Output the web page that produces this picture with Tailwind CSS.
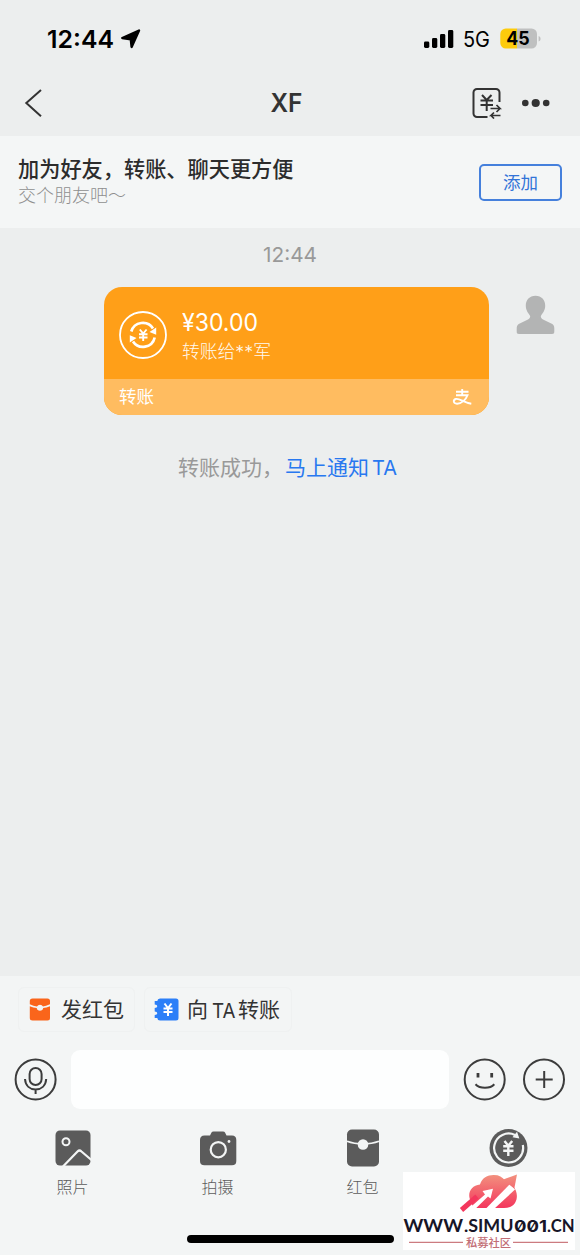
<!DOCTYPE html>
<html lang="zh-CN">
<head>
<meta charset="utf-8">
<meta name="viewport" content="width=device-width, initial-scale=1">
<title>XF</title>
<script src="https://cdn.jsdelivr.net/npm/@tailwindcss/browser@4"></script>
</head>
<body class="bg-[#eceeee] font-['Inter','Noto_Sans_CJK_SC',sans-serif] text-[#333]">
<div class="relative flex h-[1255px] w-[580px] flex-col overflow-hidden">
  <!-- Status bar -->
  <div class="flex h-[78px] shrink-0 items-center justify-between pr-[39px] pl-[46px] text-black">
    <div class="flex items-center gap-[3px]">
      <svg width="72" height="30" viewBox="0 0 72 30"><text x="1" y="23.500" textLength="67" lengthAdjust="spacingAndGlyphs" font-size="24.5" class="font-semibold">12:44</text></svg>
      <svg width="20" height="20" viewBox="0 0 20 20"><path d="M18 1.600 10.600 18 9.800 10.300 1.300 9Z" fill="#000" stroke="#000" stroke-width="2.400" stroke-linejoin="round"/></svg>
    </div>
    <div class="flex items-center">
      <svg width="30" height="20" viewBox="0 0 30 20"><rect x="0" y="12.5" width="5.3" height="6.5" rx="1.4"/><rect x="8" y="9" width="5.3" height="10" rx="1.4"/><rect x="16" y="5" width="5.3" height="14" rx="1.4"/><rect x="24" y="1" width="5.3" height="18" rx="1.4"/></svg>
      <svg class="ml-[9px]" width="28" height="24" viewBox="0 0 28 24"><text x="0" y="20" textLength="27" lengthAdjust="spacingAndGlyphs" font-size="21">5G</text></svg>
      <svg class="ml-[9px]" width="41" height="22" viewBox="0 0 41 22"><path d="M6 .5H17V20.500H6A5.500 5.500 0 0 1 .3 15V6A5.500 5.500 0 0 1 6 .5Z" fill="#fdcb0c"/><path d="M17 .5H31.500A5.500 5.500 0 0 1 37 6V15A5.500 5.500 0 0 1 31.500 20.500H17Z" fill="#bfc0c0"/><path d="M38.600 8C41.200 8.800 41.200 12.800 38.600 13.600Z" fill="#bfc0c0"/><text x="6.300" y="17" textLength="23.500" lengthAdjust="spacingAndGlyphs" font-size="18.500" class="font-bold">45</text></svg>
    </div>
  </div>
  <!-- Title bar -->
  <div class="grid h-[58px] shrink-0 grid-cols-3 items-center pr-[30px] pb-[9px] pl-[24px]">
    <svg width="20" height="30" viewBox="0 0 20 30"><path d="M17 2 2.300 15 17 28.300" fill="none" stroke="#333" stroke-width="2"/></svg>
    <div><svg class="mx-auto" width="34" height="30" viewBox="0 0 34 30"><text x="0.500" y="24" textLength="32" lengthAdjust="spacingAndGlyphs" font-size="25" fill="#333" class="font-semibold">XF</text></svg></div>
    <div class="flex items-center justify-end gap-[19px]">
      <svg width="30" height="32" viewBox="0 0 30 32" fill="none" stroke="#333" stroke-width="2"><path d="M15.500 30H5A3.500 3.500 0 0 1 1.500 26.500V5.500A3.500 3.500 0 0 1 5 2H24A3.500 3.500 0 0 1 27.500 5.500V15"/><path d="M10 8 14.700 13 19.500 8M14.700 13V24M8.500 13.500H21M8.500 18H21"/><path d="M18.500 21.500H28L24.500 18M28 21.500 24.500 25M28.500 28.500H19L22 25.500M19 28.500 22 31.500" stroke-width="1.700"/></svg>
      <svg width="29" height="10" viewBox="0 0 29 10" fill="#333"><circle cx="4.300" cy="5" r="3.300"/><circle cx="14.700" cy="5" r="4.100"/><circle cx="25.200" cy="5" r="3.300"/></svg>
    </div>
  </div>
  <!-- Add friend banner -->
  <div class="flex h-[92px] shrink-0 items-center justify-between bg-[#f4f6f6] px-[18px]">
    <div class="flex flex-col pt-[2px]">
      <div class="-mt-px text-[21.2px] leading-[27px] font-medium text-[#2c2c2c]">加为好友，转账、聊天更方便</div>
      <div class="text-[18px] leading-[26px] font-light text-[#8f8f8f]">交个朋友吧～</div>
    </div>
    <button class="flex h-[37px] w-[83px] items-center justify-center rounded-[5px] border-2 border-[#4580dc] pt-[2px] text-[17.500px] text-[#3274d8]">添加</button>
  </div>
  <!-- Conversation -->
  <div class="flex h-[748px] shrink-0 flex-col items-center">
    <div class="mt-[14px] h-[24px] w-[54px]"><svg width="54" height="24" viewBox="0 0 54 24"><text x="0" y="20" textLength="54" lengthAdjust="spacingAndGlyphs" font-size="20.500" fill="#999">12:44</text></svg></div>
    <div class="mt-[21px] flex w-full items-start pl-[104px]">
      <div class="h-[128px] w-[385px] overflow-hidden rounded-[18px] bg-[#ff9f18] text-white">
        <div class="flex h-[92px] items-center gap-[14px] pl-[14px]">
          <svg class="mt-[3px]" width="50" height="50" viewBox="0 0 50 50" fill="none" stroke="#fff"><circle cx="25" cy="25" r="23" stroke-width="1.800"/><path d="M13.300 21.500A12 12 0 0 1 35 18.500M36.700 27.500A12 12 0 0 1 15 31.500" stroke-width="2.700"/><path d="M38.200 17.500V24.800L31.500 22ZM11.800 32.500V25.200L18.500 28Z" fill="#fff" stroke="none"/><path d="M21.800 19.500 25.200 23.500 28.600 19.500M25.200 23.500V31M21 24.200H29.500M21 27.500H29.500" stroke-width="1.900"/></svg>
          <div class="flex flex-col pt-[9px]">
            <svg width="80" height="28" viewBox="0 0 80 28"><text x="0" y="21.500" textLength="76" lengthAdjust="spacingAndGlyphs" font-size="24" fill="#fff">¥30.00</text></svg>
            <div class="text-[17.800px] leading-[30px] font-light text-[#fffaf0]">转账给**军</div>
          </div>
        </div>
        <div class="flex h-[36px] items-center justify-between bg-[#ffbc60] pr-[17px] pl-[15px] text-[17.500px]">
          <span>转账</span>
          <svg width="20" height="18" viewBox="0 0 20 18" fill="none" stroke="#fff" stroke-width="1.900"><path d="M10.200 1V7M4 3.800H16.500M4 7.300H15.500C14 11.500 9.500 15.800 5 15.700 1.200 15.500.8 12 3.800 11 7.500 10 11.500 14.500 19.300 15.700"/></svg>
        </div>
      </div>
      <svg class="mt-[8px] ml-[27px]" width="40" height="40" viewBox="0 0 40 40" fill="#b3b4b4"><path d="M19.500.8C25.500.8 29.200 5.100 29.200 10.700 29.200 15.500 26.500 18.200 25 20.800 24.300 22.300 25.500 23.500 27 24.500L36.300 29C38 30.200 38.300 31.800 38.300 33.800V36.500C38.300 38.300 37.600 39 36 39H3C1.300 39 .7 38.300.7 36.500V33.800C.7 31.800 1.100 30.200 2.700 29L12 24.500C13.500 23.500 14.700 22.300 14 20.800 12.500 18.200 9.800 15.500 9.800 10.700 9.800 5.100 13.500.8 19.500.8Z"/></svg>
    </div>
    <div class="mt-[38px] flex w-full pl-[178px] text-[21px] leading-[30px]">
      <span class="w-[107px] whitespace-nowrap text-[#999]">转账成功，</span><span class="text-[#2878f0]">马上通知</span><svg class="ml-[3px]" width="32" height="30" viewBox="0 0 32 30"><text x="0" y="22" textLength="25" lengthAdjust="spacingAndGlyphs" font-size="20.500" fill="#2878f0">TA</text></svg>
    </div>
  </div>
  <!-- Composer -->
  <div class="flex h-[279px] shrink-0 flex-col bg-[#f3f5f5]">
    <div class="mt-[11px] flex h-[45px] gap-[9px] pl-[18px] text-[21px]">
      <div class="flex w-[117px] items-center rounded-[6px] border border-[#eff1f1] pl-[10px]">
        <svg width="22" height="23" viewBox="-.5 0 22 23"><path d="M3 .5H18Q20.500.5 20.500 3V6.300Q16 8.300 13.500 8.600A3.300 3.300 0 0 0 7.500 8.600Q4 8.200.3 6.300V3Q.3.500 3 .5Z" fill="#fa651b"/><path d="M.3 8.200Q4 9.800 7.200 10.100A3.300 3.300 0 0 0 13.700 10.100Q17 9.800 20.500 8.200V20Q20.500 22.500 18 22.500H3Q.3 22.500.3 20Z" fill="#fa651b"/></svg>
        <span class="ml-[10px] pt-px whitespace-nowrap">发红包</span>
      </div>
      <div class="flex w-[148px] items-center rounded-[6px] border border-[#eff1f1] pl-[9px]">
        <svg width="25" height="23" viewBox="0 0 25 23"><path d="M6 .5H22Q24.500.5 24.500 3V20Q24.500 22.500 22 22.500H6Q3.500 22.500 3.300 20H.7V17Q3.300 17 3.300 15.300 3.300 13.500.7 13.500V10Q3.300 10 3.300 8.200 3.300 6.500.7 6.500V3H3.300Q3.500.5 6 .5Z" fill="#2c7ff8"/><path d="M10.500 5.500 14 10 17.500 5.500M14 10V18M9.500 10.500H18.500M9.500 14H18.500" fill="none" stroke="#fff" stroke-width="2"/></svg>
        <span class="ml-[8px] pt-px">向</span><svg class="ml-[4px]" width="26" height="30" viewBox="0 0 26 30"><text x="0" y="22.500" textLength="23.500" lengthAdjust="spacingAndGlyphs" font-size="20.500" fill="#333">TA</text></svg><span class="pt-px whitespace-nowrap">转账</span>
      </div>
    </div>
    <div class="mt-[18px] flex h-[59px] items-center pl-[14px]">
      <svg width="43" height="43" viewBox="0 0 43 43" fill="none" stroke="#3c3c3c" stroke-width="2"><circle cx="21.600" cy="21.500" r="20"/><rect x="15.600" y="10" width="12" height="17" rx="6"/><path d="M11 21C11.500 28 16 31.500 21.600 31.500S31.700 28 32.200 21M21.600 31.500V36"/></svg>
      <div class="ml-[14px] h-[59px] w-[378px] rounded-[9px] bg-[#fdfefe]"></div>
      <svg class="ml-[14px]" width="43" height="43" viewBox="0 0 43 43" fill="none" stroke="#3c3c3c" stroke-width="2"><circle cx="21.700" cy="21.500" r="20"/><path d="M15 15V19.500M28.700 15V19.500" stroke-width="2.800"/><path d="M12.500 26.300C17 31 27 31 31.300 26.300"/></svg>
      <svg class="ml-[16px]" width="43" height="43" viewBox="0 0 43 43" fill="none" stroke="#3c3c3c" stroke-width="2"><circle cx="22" cy="21.500" r="20"/><path d="M22.200 13V30M13.700 21.500H30.700"/></svg>
    </div>
    <div class="mt-[19px] grid grid-cols-4 text-[16px] leading-[26px] font-light text-[#5c5c5c]">
      <div class="flex flex-col items-center gap-[6px]">
        <svg width="36" height="40" viewBox="0 0 36 40"><rect x=".5" y="2.500" width="35" height="35" rx="4.500" fill="#5b5b5b"/><circle cx="11" cy="13.800" r="3.500" fill="none" stroke="#f3f5f5" stroke-width="2"/><path d="M8 38.500 22.500 23.500Q24.500 21.500 26.500 23.500L37 32.500" fill="none" stroke="#f3f5f5" stroke-width="2.200"/></svg><span>照片</span>
      </div>
      <div class="flex flex-col items-center gap-[6px]">
        <svg width="38" height="40" viewBox="0 0 38 40"><path d="M11 7.500 12.500 4.500Q13 3.500 14.500 3.500H24Q25.500 3.500 26 4.500L27.500 7.500H33Q37.300 7.500 37.300 12V33Q37.300 37.300 33 37.300H5.500Q1 37.300 1 33V12Q1 7.500 5.500 7.500Z" fill="#5b5b5b"/><circle cx="19.300" cy="21.700" r="7.600" fill="none" stroke="#f3f5f5" stroke-width="2.200"/><circle cx="30" cy="13.500" r="1.400" fill="#f3f5f5"/></svg><span>拍摄</span>
      </div>
      <div class="flex flex-col items-center gap-[6px]">
        <svg width="34" height="40" viewBox="0 0 34 40"><rect x="1" y="1.500" width="32" height="37" rx="5" fill="#5b5b5b"/><path d="M1 13.300Q8 16 17 16T33 13.300" fill="none" stroke="#f3f5f5" stroke-width="1.700"/><circle cx="17" cy="16.500" r="5.300" fill="#f3f5f5"/></svg><span>红包</span>
      </div>
      <div class="flex flex-col items-center">
        <svg width="40" height="40" viewBox="0 0 40 40" fill="none" stroke="#f3f5f5"><circle cx="20.500" cy="20" r="19" fill="#5b5b5b" stroke="none"/><path d="M34.800 17A14.500 14.500 0 1 1 27 7" stroke-width="2.200"/><path d="M29 3.800 31.400 10.600 24.500 9.200Z" fill="#f3f5f5" stroke="none"/><path d="M16.500 13 20.300 17.800 24.200 13M20.300 17.500V28M15.200 18.300H25.500M15.200 22.800H25.500" stroke-width="2.400"/></svg>
      </div>
    </div>
  </div>
  <!-- Home indicator -->
  <div class="absolute top-[1235px] left-[187px] h-[8px] w-[207px] rounded-full bg-black"></div>
  <!-- Community badge -->
  <div class="absolute top-[1172px] left-[403px] h-[78px] w-[172px] bg-white">
    <svg width="172" height="78" viewBox="0 0 172 78">
      <defs><linearGradient id="g" gradientUnits="userSpaceOnUse" x1="0" y1="3" x2="0" y2="38"><stop stop-color="#f2907e"/><stop offset="1" stop-color="#f4315b"/></linearGradient></defs>
      <path d="M68.500 30C63.500 23 67 13.500 77 12.500 79 5.500 85 2.800 91 3 96 3 99.500 5 102 8.500L110 14C114.500 19 115 26 112 31 109.500 34.500 106 36 101 36H70Z" fill="url(#g)"/>
      <path d="M58.500 38 74 24.500" stroke="#f4375d" stroke-width="5"/>
      <path d="M62.500 39.500 82 22.500 79.500 19 90 16.800 87.500 26.500 85 24.500 73 36.200 66 40Z" fill="#fff"/>
      <path d="M83 36.500 107 12 112 17.500 91.500 36.500Z" fill="#fff"/>
      <path d="M91 22 105.500 8.500" stroke="url(#g)" stroke-width="5"/>
      <path d="M99.500 7.800 114 2.500 111.300 16.500Z" fill="url(#g)"/>
      <g fill="#171628" font-size="16.500" class="font-['Lato','Inter',sans-serif] font-bold">
        <text x="0.500" y="59.500" textLength="59.500" lengthAdjust="spacingAndGlyphs">WWW</text>
        <text x="61" y="59.500" textLength="49.500" lengthAdjust="spacingAndGlyphs">.SIMU</text>
        <text x="111" y="59.500" textLength="33" lengthAdjust="spacingAndGlyphs" class="font-['Inter',sans-serif] [font-feature-settings:'zero']">001</text>
        <text x="144" y="59.500" textLength="27.500" lengthAdjust="spacingAndGlyphs">.CN</text>
      </g>
      <path d="M6 70.300H60M110 70.300H165" stroke="#cc7b80" stroke-width="1.300"/>
      <text x="63" y="74.500" textLength="45" font-size="11.300" fill="#c26d75" class="font-medium">私募社区</text>
    </svg>
  </div>
</div>
</body>
</html>
